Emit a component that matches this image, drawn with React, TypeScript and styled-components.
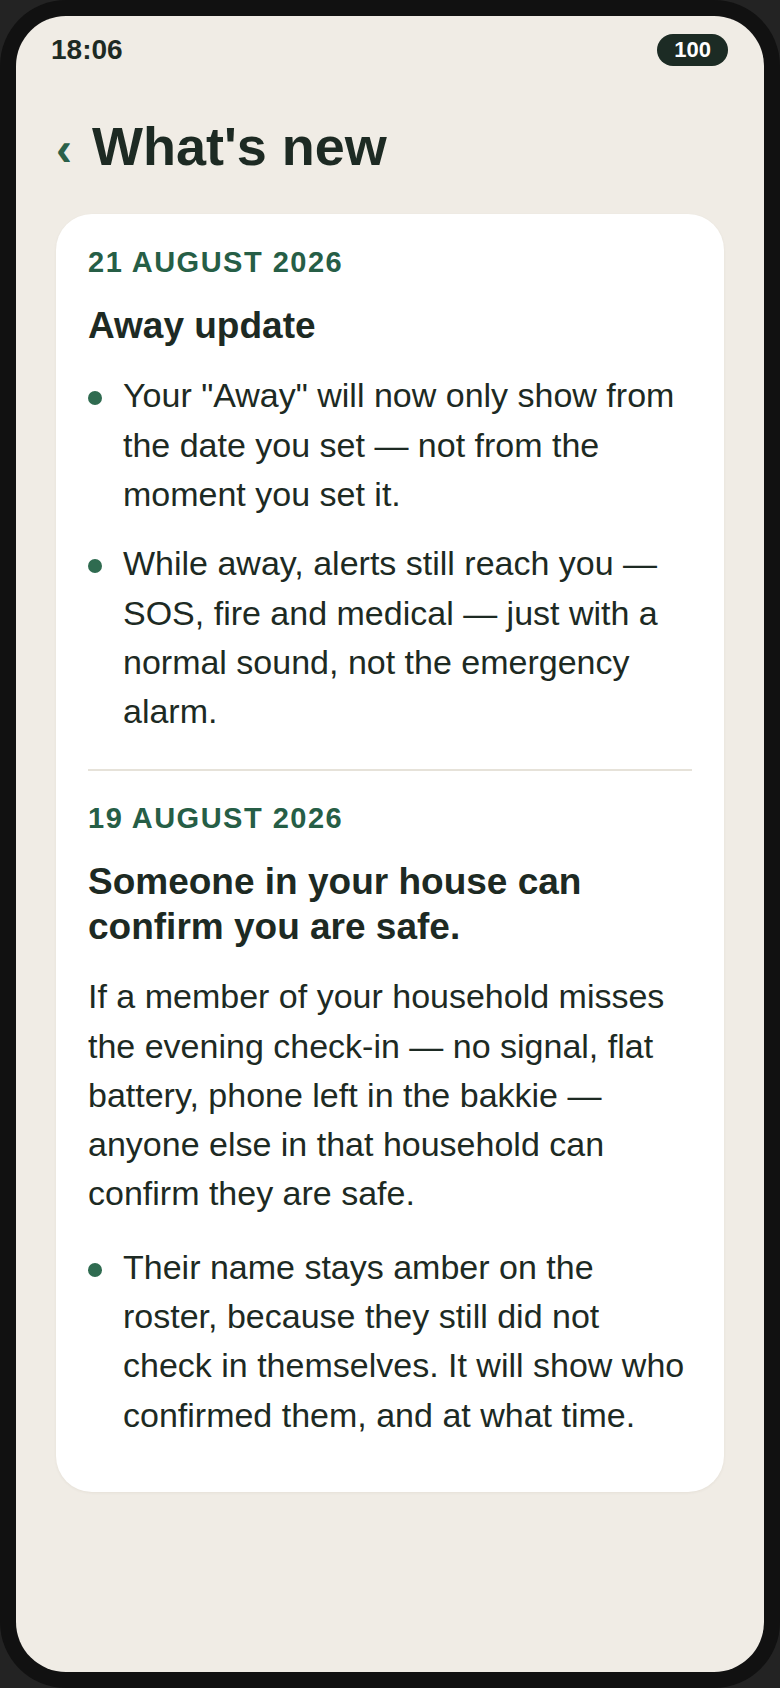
import styled, { createGlobalStyle } from 'styled-components'

const GlobalStyle = createGlobalStyle`
    * {
        box-sizing: border-box;
    }
    html, body {
        margin: 0;
        padding: 0;
        background: #232323;
    }
    body {
        font-family: "Liberation Sans", Arial, sans-serif;
        -webkit-font-smoothing: antialiased;
    }
`

const Frame = styled.div`
    width: 780px;
    height: 1688px;
    padding: 16px;
    background: #111111;
    border-radius: 66px;
`

const Screen = styled.div`
    height: 100%;
    padding-top: 18px;
    background: #f0ece5;
    border-radius: 50px;
    overflow: hidden;
    color: #1d2a23;
`

const StatusBar = styled.div`
    display: flex;
    justify-content: space-between;
    align-items: center;
    height: 32px;
    padding: 0 36px 0 35px;

    .time {
        font-size: 28px;
        line-height: 32px;
        font-weight: 700;
    }
    .battery {
        height: 32px;
        padding: 0 17px;
        border-radius: 16px;
        background: #1c2b24;
        color: #fff;
        font-size: 22px;
        line-height: 32px;
        font-weight: 700;
    }
`

const Content = styled.main`
    padding: 0 40px;
`

const Header = styled.header`
    display: flex;
    align-items: baseline;
    margin-top: 48px;

    .back {
        padding: 0;
        margin-right: 20px;
        border: none;
        background: transparent;
        color: #2a6049;
        font-family: inherit;
        font-size: 48px;
        font-weight: 700;
        line-height: 64px;
        cursor: pointer;
    }
    h1 {
        margin: 0;
        font-size: 54px;
        line-height: 1.2;
        font-weight: 700;
    }
`

const Card = styled.section`
    margin-top: 33px;
    padding: 31px 32px 52px;
    background: #ffffff;
    border-radius: 36px;
    box-shadow: 0 1px 3px rgba(60, 45, 20, 0.06);
`

const DateLabel = styled.div`
    font-size: 29px;
    line-height: 34px;
    font-weight: 700;
    letter-spacing: 1.5px;
    text-transform: uppercase;
    color: #265e46;
`

const EntryTitle = styled.h2`
    margin: 25px 0 23px;
    font-size: 37px;
    line-height: 1.2;
    font-weight: 700;
`

const Paragraph = styled.p`
    margin: 0 0 24px;
    font-size: 34px;
    line-height: 1.45;
`

const BulletList = styled.ul`
    display: flex;
    flex-direction: column;
    gap: 20px;
    margin: 0;
    padding: 0;
    list-style: none;
`

const Bullet = styled.li`
    display: flex;
    font-size: 34px;
    line-height: 1.45;

    &::before {
        content: '';
        flex: none;
        width: 14px;
        height: 14px;
        margin: 20px 21px 0 0;
        border-radius: 50%;
        background: #2f6b50;
    }
`

const Divider = styled.hr`
    height: 2px;
    margin: 33px 0 30px;
    border: none;
    background: #e6e2d9;
`

type Entry = {
    date: string
    title: string
    intro?: string
    bullets: string[]
}

const entries: Entry[] = [
    {
        date: '21 August 2026',
        title: 'Away update',
        bullets: [
            'Your "Away" will now only show from the date you set \u2014 not from the moment you set it.',
            'While away, alerts still reach you \u2014 SOS, fire and medical \u2014 just with a normal sound, not the emergency alarm.',
        ],
    },
    {
        date: '19 August 2026',
        title: 'Someone in your house can confirm you are safe.',
        intro: 'If a member of your household misses the evening check-in \u2014 no signal, flat battery, phone left in the bakkie \u2014 anyone else in that household can confirm they are safe.',
        bullets: [
            'Their name stays amber on the roster, because they still did not check in themselves. It will show who confirmed them, and at what time.',
        ],
    },
]

export default function App() {
    return (
        <>
            <GlobalStyle />
            <Frame>
                <Screen>
                    <StatusBar>
                        <span className="time">18:06</span>
                        <span className="battery">100</span>
                    </StatusBar>
                    <Content>
                        <Header>
                            <button className="back" aria-label="Back">‹</button>
                            <h1>What's new</h1>
                        </Header>
                        <Card>
                            {entries.map((entry, i) => (
                                <div key={entry.date}>
                                    {i > 0 && <Divider />}
                                    <DateLabel>{entry.date}</DateLabel>
                                    <EntryTitle>{entry.title}</EntryTitle>
                                    {entry.intro && <Paragraph>{entry.intro}</Paragraph>}
                                    <BulletList>
                                        {entry.bullets.map((b) => (
                                            <Bullet key={b}>{b}</Bullet>
                                        ))}
                                    </BulletList>
                                </div>
                            ))}
                        </Card>
                    </Content>
                </Screen>
            </Frame>
        </>
    )
}
